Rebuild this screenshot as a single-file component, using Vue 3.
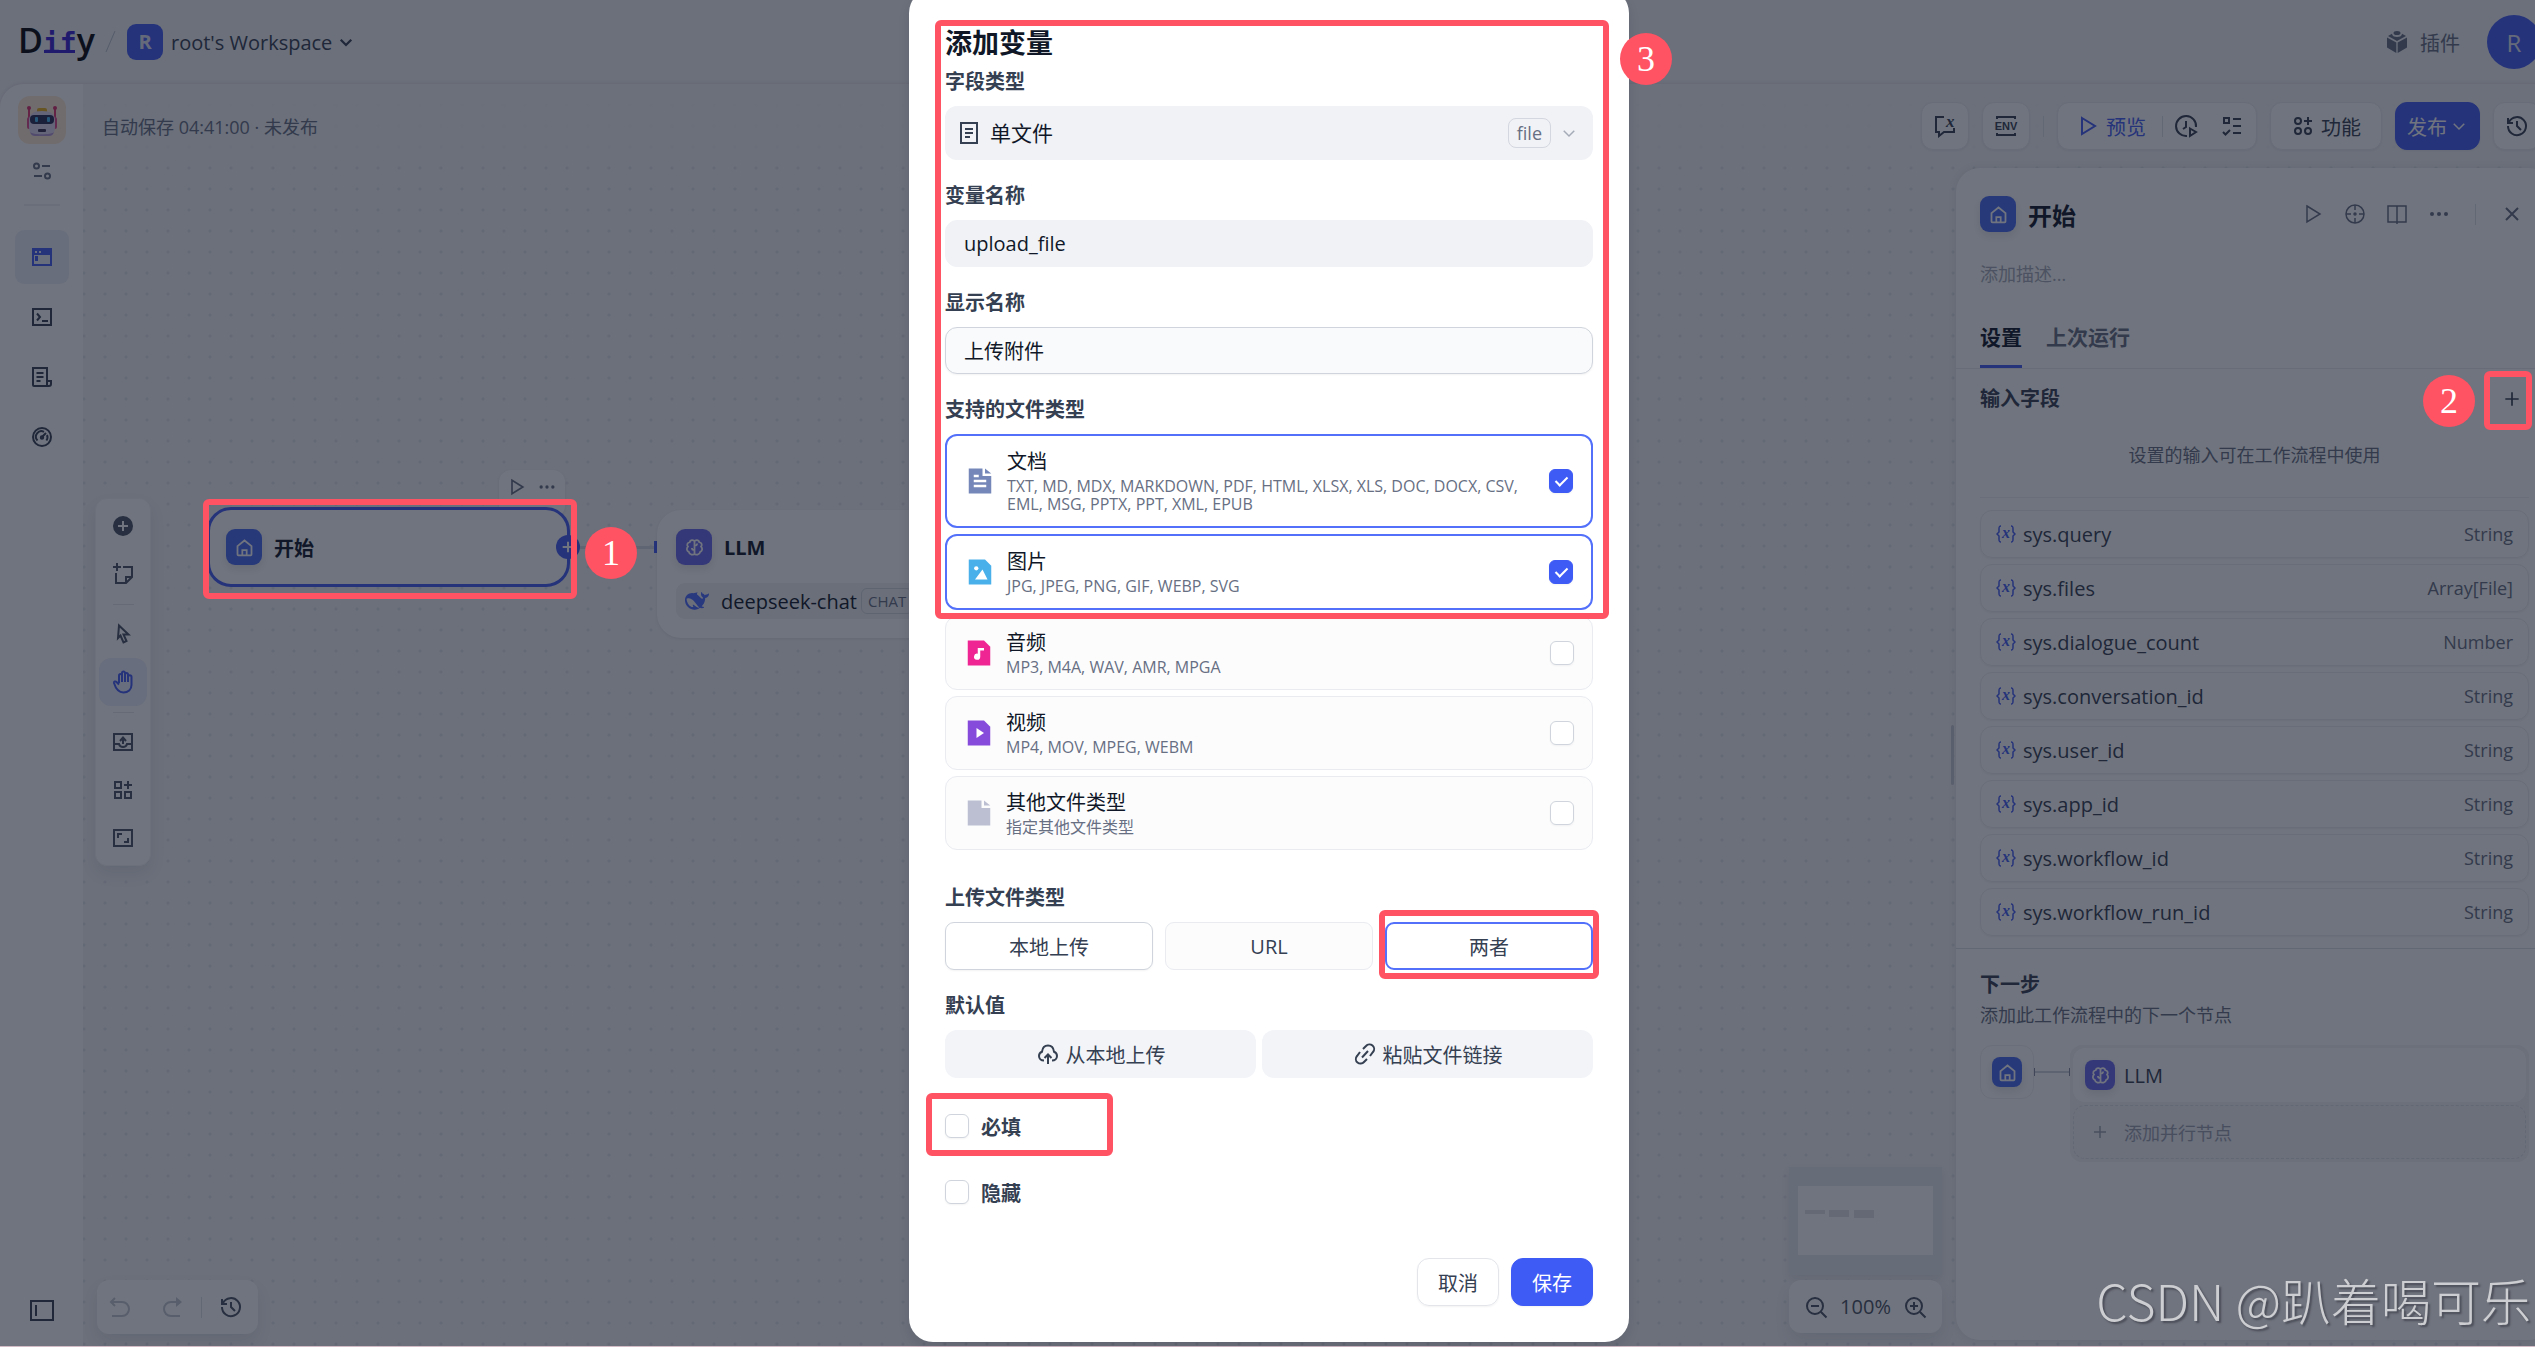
<script setup>
import { ref } from 'vue'

// 图标：24x24，线条型
const icons = {
  down: '<path d="M5 9l7 7 7-7"/>',
  sliders: '<circle cx="6.5" cy="7" r="2.5"/><path d="M12 7h8M4 17h8"/><circle cx="17.5" cy="17" r="2.5"/>',
  window: '<path d="M3 4h18v16H3z"/><path d="M2 3h20v7H2z" fill="currentColor" stroke="none"/><path d="M5 6h2v2H5zM9 6h2v2H9z" fill="#eef1fe" stroke="none"/><path d="M5 11h3v5H5z" fill="currentColor" stroke="none"/>',
  terminal: '<path d="M3 4h18v16H3zM7 8.500l3 3.500-3 3.500M12 16h6"/>',
  logs: '<path d="M17 16V3H3v17c0 .6.4 1 1 1h15c1 0 2-1 2-2v-3h-4v5M6.500 8h7M6.500 12h7M6.500 16h4"/>',
  gauge: '<circle cx="12" cy="12" r="9"/><path d="M7.500 15.500a5.500 5.500 0 0 1 6.500-8.700M17 10a5.500 5.500 0 0 1-.6 5.500M12 12l4-4"/><circle cx="12" cy="12.500" r="1.200"/>',
  sidebar: '<path d="M1 2h22v19H1zM6 6v11"/>',
  addCircle: '<circle cx="12" cy="12" r="10" fill="currentColor" stroke="none"/><path d="M12 7v10M7 12h10" stroke="#fff"/>',
  note: '<path d="M5 11v10h10l6-6V5H12M15 21v-6h6M2 5h8M6 1v8"/>',
  pointer: '<path d="M8 3.500l9.500 9h-5l3 6.500-3 1.500-3-7L7 16z"/>',
  hand: '<path d="M8 13V5.500a1.500 1.500 0 0 1 3 0V12M11 12V3a1.500 1.500 0 0 1 3 0v9M14 12V4.500a1.500 1.500 0 0 1 3 0V12M17 12V7a1.500 1.500 0 0 1 3.500 0v8c0 4.500-3.500 7.500-8 7.500S5 19.500 3 13c-.3-1.500 1.500-2 2.500-1L8 14.500"/>',
  inbox: '<path d="M3 4h18v16H3zM3 14h5c1 4 7 4 8 0h5M12 14V8M9 11l3-3.500 3 3.500"/>',
  appsAdd: '<path d="M4 4h6v6H4zM4 14h6v6H4zM14 14h6v6h-6zM17 3v8M13 7h8"/>',
  fit: '<path d="M3 4h18v16H3zM7 12V8h4M17 12v4h-4"/>',
  undo: '<path d="M7 3L3 7l4 4M3 7h11a6.500 6.500 0 0 1 0 14H4"/>',
  redo: '<path d="M20 7h-9a7 7 0 0 0 0 14h9"/><path d="M16 2l6 5-6 5z" fill="currentColor" stroke="none"/>',
  history: '<path d="M4 8a9 9 0 1 1-1 4M3 4v5h5M12 7v5l4 4"/>',
  play: '<path d="M6 4l13 8-13 8z"/>',
  dots: '<g fill="currentColor" stroke="none"><circle cx="5" cy="12" r="2"/><circle cx="12" cy="12" r="2"/><circle cx="19" cy="12" r="2"/></g>',
  home: '<path d="M4 10.500L12 4l8 6.500V20a1 1 0 0 1-1 1H5a1 1 0 0 1-1-1zM9.500 21v-6h5v6"/>',
  brain: '<path d="M12 4v16M12 5c-1-2-5-2-5.500 1C3.500 6.500 3 9 4.500 11c-2 2-1.500 5 1 6 .5 3.500 5.500 4 6.500 2M12 5c1-2 5-2 5.500 1 3 .5 3.500 3 2 5 2 2 1.500 5-1 6-.5 3.500-5.500 4-6.500 2M12 10c2 0 3-1 3-2.500M12 15c-2 0-3-1-3-2.500"/>',
  whale: '<path fill="currentColor" stroke="none" fill-rule="evenodd" d="M23.748 4.482c-.254-.124-.364.113-.512.234-.051.039-.094.09-.137.136-.372.397-.806.657-1.373.626-.829-.046-1.537.214-2.163.848-.133-.782-.575-1.248-1.247-1.548-.352-.156-.708-.311-.955-.65-.172-.241-.219-.51-.305-.774-.055-.16-.11-.323-.293-.35-.2-.031-.278.136-.356.276-.313.572-.434 1.202-.422 1.84.027 1.436.633 2.58 1.838 3.393.137.093.172.187.129.323-.082.28-.18.552-.266.833-.055.179-.137.217-.329.14a5.526 5.526 0 01-1.736-1.18c-.857-.828-1.631-1.742-2.597-2.458a11.365 11.365 0 00-.689-.471c-.985-.957.13-1.743.388-1.836.27-.098.093-.432-.779-.428-.872.004-1.67.295-2.687.684a3.055 3.055 0 01-.465.137 9.597 9.597 0 00-2.883-.102c-1.885.21-3.39 1.102-4.497 2.623C.082 8.606-.231 10.684.152 12.85c.403 2.284 1.569 4.175 3.36 5.653 1.858 1.533 3.997 2.284 6.438 2.14 1.482-.085 3.133-.284 4.994-1.86.47.234.962.327 1.78.397.63.059 1.236-.03 1.705-.128.735-.156.684-.837.419-.961-2.155-1.004-1.682-.595-2.113-.926 1.096-1.296 2.746-2.642 3.392-7.003.05-.347.007-.565 0-.845-.004-.17.035-.237.23-.256a4.173 4.173 0 001.545-.475c1.396-.763 1.96-2.015 2.093-3.517.02-.23-.004-.467-.247-.588zM11.581 18c-2.089-1.642-3.102-2.183-3.52-2.16-.392.024-.321.471-.235.763.09.288.207.486.371.739.114.167.192.416-.113.603-.673.416-1.842-.14-1.897-.167-1.361-.802-2.5-1.86-3.301-3.307-.774-1.393-1.224-2.887-1.298-4.482-.02-.386.093-.522.477-.592a4.696 4.696 0 011.529-.039c2.132.312 3.946 1.265 5.468 2.774.868.86 1.525 1.887 2.202 2.891.72 1.066 1.494 2.082 2.48 2.914.348.292.625.514.891.677-.802.09-2.14.11-3.054-.614z"/>',
  zoomOut: '<circle cx="11" cy="11" r="8"/><path d="M17 17l5.500 5.500M7 11h8"/>',
  zoomIn: '<circle cx="11" cy="11" r="8"/><path d="M17 17l5.500 5.500M7 11h8M11 7v8"/>',
  cube: '<g fill="currentColor" stroke="none"><path d="M2 7.500l9.300 5v10.500L2 17.500zM22 7.500l-9.300 5v10.500l9.300-5.500zM3 6l4-2.300c0 2 2 3.300 5 3.300s5-1.300 5-3.300L21 6l-9 5z"/><ellipse cx="12" cy="3" rx="3.500" ry="2"/></g>',
  chatVar: '<path d="M11 3H3v15h3v4l5-4h10v-4"/><text x="13" y="13" font-size="17" font-style="italic" font-weight="700" font-family="Liberation Serif, serif" fill="currentColor" stroke="none">x</text>',
  env: '<path d="M3 5V3h18v2M3 19v2h18v-2"/><text x="12" y="16" text-anchor="middle" font-size="11" font-weight="700" font-family="Liberation Sans, sans-serif" fill="currentColor" stroke="none">ENV</text>',
  runHistory: '<path d="M13 22A10 10 0 1 1 22 13M12 7v6l-3 2"/><path d="M16 14.500l6 3.500-6 4z"/>',
  checklist: '<path d="M4 4h5v5H4zM13 5h8M13 12h8M13 19h8M3 18l2.500 2.500L10 16"/>',
  features: '<circle cx="7" cy="7" r="3"/><circle cx="7" cy="17" r="3"/><circle cx="17" cy="17" r="3"/><path d="M17 3v8M13 7h8"/>',
  target: '<circle cx="12" cy="12" r="9"/><path d="M12 3v5M12 16v5M3 12h5M16 12h5"/><circle cx="12" cy="12" r="1"/>',
  book: '<path d="M12 4H3v16h18V4h-9zM12 4v18"/>',
  close: '<path d="M6 6l12 12M18 6L6 18"/>',
  plus: '<path d="M12 4v16M4 12h16"/>',
  doc: '<path d="M4 2h16v20H4zM8 8h8M8 12h8M8 16h5"/>',
  cloud: '<path d="M8 18.500c-3 0-5-2-5-4.500 0-2 1-3.500 3-4.300C6.500 5.500 9 3.500 12 3.500s5.500 2 6 6.200c2 .8 3 2.300 3 4.300 0 2.500-2 4.500-5 4.500M12 22v-9M8.500 16l3.500-3.500 3.500 3.500"/>',
  link: '<path d="M10 7l3-3a4.500 4.500 0 0 1 7 6l-3 4M14 17l-3 3a4.500 4.500 0 0 1-7-6l3-4M15 9l-6 6.500"/>',
}

// 文件类型图标（填充型）
const fileIcons = {
  doc: '<path fill="#7487b8" d="M3 2h11v6h7v14H3zM7 7v2h4V7zM7 11v2h10v-2zM7 15v2h10v-2z" fill-rule="evenodd"/><path fill="#7487b8" d="M16 2l5 4h-5z"/>',
  image: '<path fill="#4ab0ea" d="M3 2h13l5 5v15H3z"/><circle cx="9" cy="9" r="1.700" fill="#fff"/><path fill="#fff" d="M8 18l6-8 4 8z"/>',
  audio: '<path fill="#f02594" d="M3 2h13l5 5v15H3z"/><path fill="#fff" d="M11 8h5v2h-3v5a2.500 2.500 0 1 1-2-2.500z"/>',
  video: '<path fill="#864bdb" d="M3 2h13l5 5v15H3z"/><path fill="#fff" d="M10 8l6 4-6 4z"/>',
  other: '<path fill="#bcbfd2" d="M3 2h11v6h7v14H3z"/><path fill="#bcbfd2" d="M16 2l5 4h-5z"/>',
}

const navItems = ['window', 'terminal', 'logs', 'gauge']

const sysVars = [
  { name: 'sys.query', type: 'String' },
  { name: 'sys.files', type: 'Array[File]' },
  { name: 'sys.dialogue_count', type: 'Number' },
  { name: 'sys.conversation_id', type: 'String' },
  { name: 'sys.user_id', type: 'String' },
  { name: 'sys.app_id', type: 'String' },
  { name: 'sys.workflow_id', type: 'String' },
  { name: 'sys.workflow_run_id', type: 'String' },
]

const fieldType = ref('file')
const varName = ref('upload_file')
const label = ref('上传附件')
const required = ref(false)
const hidden = ref(false)
const method = ref('both')

const fileTypes = ref([
  { id: 'doc', name: '文档', ext: 'TXT, MD, MDX, MARKDOWN, PDF, HTML, XLSX, XLS, DOC, DOCX, CSV, EML, MSG, PPTX, PPT, XML, EPUB', on: true },
  { id: 'image', name: '图片', ext: 'JPG, JPEG, PNG, GIF, WEBP, SVG', on: true },
  { id: 'audio', name: '音频', ext: 'MP3, M4A, WAV, AMR, MPGA', on: false },
  { id: 'video', name: '视频', ext: 'MP4, MOV, MPEG, WEBM', on: false },
  { id: 'other', name: '其他文件类型', ext: '指定其他文件类型', on: false },
])

const methods = [
  { id: 'local', name: '本地上传' },
  { id: 'url', name: 'URL' },
  { id: 'both', name: '两者' },
]
</script>

<template>
  <div class="page">
    <div class="app">
      <header class="top">
        <div class="logo">D<span class="logo-if">if</span>y</div>
        <svg class="slash" viewBox="0 0 12 24"><path d="M11 1L2 22" /></svg>
        <button class="workspace">
          <span class="ws-badge">R</span>
          <span>root's Workspace</span>
          <svg class="ico s18" viewBox="0 0 24 24" v-html="icons.down"></svg>
        </button>
        <a class="plugins" href="#">
          <svg class="ico" viewBox="0 0 24 24" v-html="icons.cube"></svg>
          <span>插件</span>
        </a>
        <button class="avatar">R</button>
      </header>

      <div class="body">
        <nav class="side">
          <div class="robot">
            <svg viewBox="0 0 48 48">
              <path d="M11 13v14M37 13v14" stroke="#e0356f" stroke-width="2" />
              <circle cx="11" cy="12" r="2" fill="#d92d6a" /><circle cx="37" cy="12" r="2" fill="#d92d6a" />
              <rect x="9" y="21" width="4" height="12" rx="2" fill="#e04a90" />
              <rect x="35" y="21" width="4" height="12" rx="2" fill="#e04a90" />
              <rect x="19" y="12" width="10" height="5" rx="2" fill="#e9b21e" />
              <path d="M11 25c0-7 4-10 13-10s13 3 13 10v5c0 6-2 10-6 10H17c-4 0-6-4-6-10z" fill="#e3d9f2" />
              <path d="M12 36c2 3 22 3 24 0-1 3-3 4-5 4H17c-2 0-4-1-5-4z" fill="#b79ad6" />
              <rect x="12" y="19" width="24" height="9" rx="4" fill="#2c2f55" />
              <rect x="17" y="21" width="3" height="5" rx="1" fill="#46b4f0" />
              <rect x="29" y="21" width="3" height="5" rx="1" fill="#46b4f0" />
              <rect x="20" y="33" width="8" height="3" rx="1" fill="#3b3456" />
            </svg>
          </div>
          <button class="side-set"><svg class="ico" viewBox="0 0 24 24" v-html="icons.sliders"></svg></button>
          <hr class="side-line" />
          <button v-for="(n, i) in navItems" :key="n" class="nav" :class="{ active: i === 0 }">
            <svg class="ico" viewBox="0 0 24 24" v-html="icons[n]"></svg>
          </button>
          <button class="side-fold"><svg class="ico" viewBox="0 0 24 24" v-html="icons.sidebar"></svg></button>
        </nav>

        <main class="canvas">
          <div class="toolbar">
            <span class="saved">自动保存 04:41:00 · 未发布</span>
            <button class="tb sq"><svg class="ico" viewBox="0 0 24 24" v-html="icons.chatVar"></svg></button>
            <button class="tb sq"><svg class="ico" viewBox="0 0 24 24" v-html="icons.env"></svg></button>
            <i class="vline"></i>
            <div class="tb group">
              <button class="preview">
                <svg class="ico" viewBox="0 0 24 24" v-html="icons.play"></svg>预览
              </button>
              <i class="vline"></i>
              <button class="mini"><svg class="ico" viewBox="0 0 24 24" v-html="icons.runHistory"></svg></button>
              <button class="mini"><svg class="ico" viewBox="0 0 24 24" v-html="icons.checklist"></svg></button>
            </div>
            <button class="tb feat"><svg class="ico" viewBox="0 0 24 24" v-html="icons.features"></svg>功能</button>
            <button class="tb publish">发布<svg class="ico s18" viewBox="0 0 24 24" v-html="icons.down"></svg></button>
            <button class="tb sq"><svg class="ico" viewBox="0 0 24 24" v-html="icons.history"></svg></button>
          </div>

          <!-- 画布节点 -->
          <div class="node-menu">
            <svg class="ico" viewBox="0 0 24 24" v-html="icons.play"></svg>
            <svg class="ico" viewBox="0 0 24 24" v-html="icons.dots"></svg>
          </div>
          <div class="node start">
            <span class="nicon blue"><svg class="ico" viewBox="0 0 24 24" v-html="icons.home"></svg></span>
            <b>开始</b>
          </div>
          <i class="edge"></i>
          <i class="port"></i>
          <button class="add-port"><svg class="ico" viewBox="0 0 24 24" v-html="icons.plus"></svg></button>
          <div class="node llm">
            <div class="node-head">
              <span class="nicon violet"><svg class="ico" viewBox="0 0 24 24" v-html="icons.brain"></svg></span>
              <b>LLM</b>
            </div>
            <div class="model">
              <svg class="whale" viewBox="0 0 24 24" v-html="icons.whale"></svg>
              <span>deepseek-chat</span>
              <em>CHAT</em>
            </div>
          </div>

          <div class="tools">
            <button><svg class="ico" viewBox="0 0 24 24" v-html="icons.addCircle"></svg></button>
            <button><svg class="ico" viewBox="0 0 24 24" v-html="icons.note"></svg></button>
            <hr />
            <button><svg class="ico" viewBox="0 0 24 24" v-html="icons.pointer"></svg></button>
            <button class="active"><svg class="ico" viewBox="0 0 24 24" v-html="icons.hand"></svg></button>
            <hr />
            <button><svg class="ico" viewBox="0 0 24 24" v-html="icons.inbox"></svg></button>
            <button><svg class="ico" viewBox="0 0 24 24" v-html="icons.appsAdd"></svg></button>
            <button><svg class="ico" viewBox="0 0 24 24" v-html="icons.fit"></svg></button>
          </div>

          <div class="undo-bar">
            <button class="off"><svg class="ico" viewBox="0 0 24 24" v-html="icons.undo"></svg></button>
            <button class="off"><svg class="ico" viewBox="0 0 24 24" v-html="icons.redo"></svg></button>
            <i class="vline"></i>
            <button><svg class="ico" viewBox="0 0 24 24" v-html="icons.history"></svg></button>
          </div>

          <div class="corner">
            <svg class="minimap" viewBox="0 0 153 108">
              <rect width="153" height="108" fill="#e9ecf2" />
              <rect x="9" y="19" width="135" height="69" fill="#fff" />
              <path d="M16 43h20v4H16zM40 43h20v7H40zM65 43h20v8H65z" fill="#e1e3e8" />
            </svg>
            <div class="zoom">
              <button><svg class="ico" viewBox="0 0 24 24" v-html="icons.zoomOut"></svg></button>
              <span>100%</span>
              <button><svg class="ico" viewBox="0 0 24 24" v-html="icons.zoomIn"></svg></button>
            </div>
          </div>

          <!-- 右侧配置面板 -->
          <i class="drag"></i>
          <aside class="panel">
            <div class="p-head">
              <span class="nicon blue"><svg class="ico" viewBox="0 0 24 24" v-html="icons.home"></svg></span>
              <h3>开始</h3>
              <button><svg class="ico thin" viewBox="0 0 24 24" v-html="icons.play"></svg></button>
              <button><svg class="ico thin" viewBox="0 0 24 24" v-html="icons.target"></svg></button>
              <button><svg class="ico thin" viewBox="0 0 24 24" v-html="icons.book"></svg></button>
              <button><svg class="ico" viewBox="0 0 24 24" v-html="icons.dots"></svg></button>
              <i class="vline"></i>
              <button><svg class="ico" viewBox="0 0 24 24" v-html="icons.close"></svg></button>
            </div>
            <p class="p-desc">添加描述...</p>
            <div class="tabs">
              <button class="on">设置</button>
              <button>上次运行</button>
            </div>
            <section class="inputs">
              <div class="in-head">
                <h4>输入字段</h4>
                <button><svg class="ico" viewBox="0 0 24 24" v-html="icons.plus"></svg></button>
              </div>
              <p class="in-tip">设置的输入可在工作流程中使用</p>
              <ul>
                <li v-for="v in sysVars" :key="v.name">
                  <svg class="var" viewBox="0 0 20 20">
                    <path d="M5 2C3 2 3 3 3 5v3L1 10l2 2v3c0 2 0 3 2 3M15 2c2 0 2 1 2 3v3l2 2-2 2v3c0 2 0 3-2 3" />
                    <text x="10" y="14" text-anchor="middle">x</text>
                  </svg>
                  <span>{{ v.name }}</span>
                  <small>{{ v.type }}</small>
                </li>
              </ul>
            </section>
            <section class="next">
              <h4>下一步</h4>
              <p>添加此工作流程中的下一个节点</p>
              <div class="flow">
                <div class="flow-from"><span class="nicon sm blue"><svg class="ico" viewBox="0 0 24 24" v-html="icons.home"></svg></span></div>
                <i class="flow-line"></i>
                <div class="flow-to">
                  <div class="flow-card"><span class="nicon sm violet"><svg class="ico" viewBox="0 0 24 24" v-html="icons.brain"></svg></span>LLM</div>
                  <button class="flow-add"><svg class="ico s18" viewBox="0 0 24 24" v-html="icons.plus"></svg>添加并行节点</button>
                </div>
              </div>
            </section>
          </aside>
        </main>
      </div>
    </div>

    <div class="overlay">
      <form class="modal" @submit.prevent>
        <h2>添加变量</h2>
        <div class="fields">
          <div class="field">
            <label for="ftype">字段类型</label>
            <div class="select">
              <svg class="ico" viewBox="0 0 24 24" v-html="icons.doc"></svg>
              <select id="ftype" v-model="fieldType">
                <option value="file">单文件</option>
              </select>
              <span class="tag">file</span>
              <svg class="ico s18 arrow" viewBox="0 0 24 24" v-html="icons.down"></svg>
            </div>
          </div>
          <div class="field">
            <label for="vname">变量名称</label>
            <input id="vname" v-model="varName" class="text" type="text" />
          </div>
          <div class="field">
            <label for="vlabel">显示名称</label>
            <input id="vlabel" v-model="label" class="text focus" type="text" />
          </div>
          <div class="field types">
            <span class="flabel">支持的文件类型</span>
            <div class="type-list">
              <label v-for="t in fileTypes" :key="t.id" class="type" :class="{ on: t.on }">
                <svg class="ficon" viewBox="0 0 24 24" v-html="fileIcons[t.id]"></svg>
                <span class="type-text">
                  <span class="type-name">{{ t.name }}</span>
                  <span class="type-ext">{{ t.ext }}</span>
                </span>
                <input v-model="t.on" type="checkbox" />
              </label>
            </div>
          </div>
          <div class="field">
            <span class="flabel">上传文件类型</span>
            <div class="methods">
              <button v-for="m in methods" :key="m.id" type="button" :class="[m.id, { on: method === m.id }]" @click="method = m.id">{{ m.name }}</button>
            </div>
          </div>
          <div class="field">
            <span class="flabel">默认值</span>
            <div class="defaults">
              <button type="button"><svg class="ico" viewBox="0 0 24 24" v-html="icons.cloud"></svg>从本地上传</button>
              <button type="button"><svg class="ico" viewBox="0 0 24 24" v-html="icons.link"></svg>粘贴文件链接</button>
            </div>
          </div>
          <div class="checks">
            <label><input v-model="required" type="checkbox" />必填</label>
            <label><input v-model="hidden" type="checkbox" />隐藏</label>
          </div>
        </div>
        <footer>
          <button type="button" class="cancel">取消</button>
          <button type="submit" class="save">保存</button>
        </footer>
        <i class="mark m-form"></i>
        <i class="mark m-both"></i>
        <i class="mark m-req"></i>
        <span class="num n3">3</span>
      </form>
    </div>

    <!-- 步骤标注 -->
    <i class="mark m-start"></i>
    <span class="num n1">1</span>
    <i class="mark m-add"></i>
    <span class="num n2">2</span>
    <div class="watermark">CSDN @趴着喝可乐</div>
  </div>
</template>

<style>
body {
  margin: 0;
}
</style>

<style scoped>
.page {
  position: relative;
  height: 100vh;
  min-height: 1200px;
  overflow: hidden;
  font-family: "Open Sans", "Noto Sans CJK SC", sans-serif;
  font-size: 20px;
  color: #354052;
  background: #f2f4f7;
}
* {
  box-sizing: border-box;
}
button,
input,
select {
  font: inherit;
  color: inherit;
  background: none;
  border: 0;
  padding: 0;
  margin: 0;
}
button {
  display: flex;
  align-items: center;
  justify-content: center;
  cursor: pointer;
}
h2, h3, h4, p, ul, hr {
  margin: 0;
  padding: 0;
  border: 0;
}
.ico {
  width: 24px;
  height: 24px;
  flex: none;
  fill: none;
  stroke: currentColor;
  stroke-width: 2;
}
.ico.s18 {
  width: 18px;
  height: 18px;
}
.ico.thin {
  stroke-width: 1.5;
}
.vline {
  width: 1px;
  height: 21px;
  background: #dfe2e8;
}

/* 页面整体比窗口略宽，右侧溢出部分隐藏 */
.app {
  display: flex;
  flex-direction: column;
  width: calc(100% + 24px);
  height: 100%;
}
.top {
  flex: none;
  display: flex;
  align-items: center;
  height: 84px;
  padding: 0 18px;
}
.logo {
  width: 86px;
  font-size: 34px;
  font-weight: 600;
  line-height: 48px;
  color: #05060c;
}
.logo-if {
  position: relative;
  font-family: "DejaVu Sans Mono", monospace;
  font-size: 28px;
  font-weight: 700;
  color: #3a22d8;
}
/* if 两个字母底部相连 */
.logo-if::after {
  content: "";
  position: absolute;
  left: 1px;
  right: 2px;
  bottom: 7px;
  height: 3px;
  background: #3a22d8;
}
.slash {
  width: 12px;
  height: 24px;
  margin-right: 11px;
  fill: none;
  stroke: #bcc2cd;
}
.workspace {
  gap: 5px;
  color: #354052;
}
.workspace .ico {
  stroke-width: 3;
}
.ws-badge {
  width: 36px;
  height: 36px;
  margin-right: 3px;
  border-radius: 9px;
  background: #445cf5;
  color: #e4e7f5;
  font-weight: 700;
  line-height: 36px;
}
.plugins {
  display: flex;
  align-items: center;
  gap: 11px;
  margin-left: auto;
  margin-right: 27px;
  color: #676f83;
  text-decoration: none;
}
.avatar {
  width: 54px;
  height: 54px;
  border-radius: 50%;
  background: #445cf5;
  color: #e4e7f5;
  font-size: 24px;
}

.body {
  flex: 1;
  display: flex;
  min-height: 0;
  border-radius: 24px 0 0 0;
  overflow: hidden;
  box-shadow: 0 -1px 3px #e6dfe6;
}
.side {
  flex: 0 0 83px;
  display: flex;
  flex-direction: column;
  align-items: center;
  padding: 12px 0 24px;
  background: #fff;
}
.robot {
  width: 48px;
  height: 48px;
  border-radius: 12px;
  background: #ffead5;
}
.side-set {
  width: 48px;
  height: 54px;
  color: #676f83;
}
.side-line {
  width: 36px;
  height: 2px;
  margin: 6px 0 24px;
  background: #f0f1f4;
}
.nav {
  width: 54px;
  height: 54px;
  margin-bottom: 6px;
  border-radius: 9px;
}
.nav.active {
  background: #eef0fc;
  color: #445cf5;
}
.side-fold {
  margin-top: auto;
}

.canvas {
  position: relative;
  flex: 1;
  display: flex;
  flex-direction: column;
  min-width: 0;
  background-color: #f2f4f7;
  background-image: radial-gradient(circle at 2px 2px, #e2e4ec 1px, transparent 2px);
  background-size: 21px 21px;
  background-position: -1px -2px;
}
.toolbar {
  flex: none;
  display: flex;
  align-items: center;
  gap: 13px;
  height: 84px;
  padding: 0 18px 0 19px;
  background: linear-gradient(#f2f4f7, #f2f4f7cc 80%, transparent);
}
.saved {
  margin-right: auto;
  font-size: 18px;
  color: #676f83;
}
.tb {
  display: flex;
  align-items: center;
  height: 48px;
  border: 1px solid #e9ebf0;
  border-radius: 12px;
  background: #fff;
  box-shadow: 0 1px 2px #1018280d;
}
.tb.sq {
  width: 48px;
}
.group {
  padding: 0 1px 0 9px;
}
.preview {
  gap: 6px;
  padding: 0 16px 0 9px;
  color: #445cf5;
}
.mini {
  width: 46px;
}
.feat {
  gap: 6px;
  padding: 0 20px;
}
.publish {
  padding: 0 11px;
  gap: 3px;
  background: #445cf5;
  border-color: #445cf5;
  color: #fff;
}

.node {
  position: absolute;
  border-radius: 24px;
  background: #fff;
}
.node b {
  color: #101828;
}
.nicon {
  display: flex;
  align-items: center;
  justify-content: center;
  width: 36px;
  height: 36px;
  border-radius: 9px;
  color: #fff;
  box-shadow: 0 4px 8px #1018281a;
}
.nicon .ico {
  width: 21px;
  height: 21px;
}
.nicon.sm {
  width: 30px;
  height: 30px;
  border-radius: 8px;
}
.blue {
  background: #4d6df5;
}
.violet {
  background: #6c6af0;
}
.start {
  left: 124px;
  top: 423px;
  display: flex;
  align-items: center;
  gap: 12px;
  width: 363px;
  height: 80px;
  padding: 0 16px;
  border: 3px solid #445cf5;
}
.node-menu {
  position: absolute;
  left: 416px;
  top: 386px;
  display: flex;
  justify-content: space-around;
  width: 66px;
  height: 48px;
  padding: 7px 3px;
  border-radius: 12px;
  background: #fff;
  box-shadow: 0 1px 3px #10182814;
  color: #676f83;
}
.node-menu .ico {
  width: 20px;
  height: 20px;
}
.edge {
  position: absolute;
  left: 487px;
  top: 462px;
  width: 86px;
  height: 3px;
  background: #d8dae3;
}
.port {
  position: absolute;
  left: 571px;
  top: 457px;
  width: 3px;
  height: 12px;
  background: #445cf5;
}
.add-port {
  position: absolute;
  left: 473px;
  top: 451px;
  width: 24px;
  height: 24px;
  border-radius: 50%;
  background: #445cf5;
  color: #fff;
}
.add-port .ico {
  width: 16px;
  height: 16px;
  stroke-width: 3;
}
.llm {
  left: 574px;
  top: 426px;
  width: 360px;
  height: 128px;
  padding: 19px;
  box-shadow: 0 1px 3px #10182814;
}
.node-head {
  display: flex;
  align-items: center;
  gap: 12px;
}
.model {
  display: flex;
  align-items: center;
  height: 36px;
  margin-top: 18px;
  padding: 0 9px;
  border-radius: 9px;
  background: #f1f2f6;
  color: #101828;
}
.whale {
  width: 24px;
  height: 24px;
  margin-right: 12px;
  color: #4d6bfe;
}
.model em {
  margin-left: 4px;
  padding: 0 6px;
  border: 1px solid #d4d7df;
  border-radius: 6px;
  font-size: 15px;
  font-style: normal;
  line-height: 24px;
  color: #676f83;
}

.tools {
  position: absolute;
  left: 12px;
  top: 414px;
  padding: 3px;
  border: 1px solid #f5f6f8;
  border-radius: 12px;
  background: #fff;
  box-shadow: 0 8px 16px #10182814;
}
.tools button {
  width: 48px;
  height: 48px;
  border-radius: 12px;
  color: #495464;
}
.tools button.active {
  background: #eceffd;
  color: #445cf5;
}
.tools hr {
  width: 21px;
  height: 1px;
  margin: 6px auto 5px;
  background: #e3e5ea;
}
.undo-bar {
  position: absolute;
  left: 14px;
  bottom: 13px;
  display: flex;
  align-items: center;
  gap: 6px;
  height: 54px;
  padding: 0 4px 0 0;
  border-radius: 12px;
  background: #fff;
  box-shadow: 0 8px 16px #10182814;
}
.undo-bar button {
  width: 46px;
  color: #495464;
}
.undo-bar .off {
  color: #c4c8d2;
}
.corner {
  position: absolute;
  right: 617px;
  bottom: 14px;
  width: 153px;
}
.minimap {
  display: block;
  width: 153px;
  height: 108px;
  box-shadow: 0 4px 8px #10182814;
}
.zoom {
  display: flex;
  align-items: center;
  justify-content: space-between;
  height: 53px;
  margin-top: 5px;
  padding: 0 15px;
  border-radius: 12px;
  background: #fff;
  box-shadow: 0 8px 16px #10182814;
  color: #495464;
}

.drag {
  position: absolute;
  right: 605px;
  top: 641px;
  width: 3px;
  height: 60px;
  border-radius: 2px;
  background: #c6cad3;
}
.panel {
  flex: 1;
  align-self: flex-end;
  display: flex;
  flex-direction: column;
  width: 597px;
  margin: 0 6px 7px 0;
  border-radius: 24px;
  background: #fff;
  box-shadow: 0 0 8px #10182814;
}
.p-head {
  display: flex;
  align-items: center;
  height: 48px;
  margin-top: 22px;
  padding: 0 20px 0 24px;
  color: #676f83;
}
.p-head h3 {
  flex: 1;
  margin-left: 12px;
  font-size: 24px;
  color: #101828;
}
.p-head button {
  width: 42px;
  height: 36px;
}
.p-head .vline {
  margin: 0 15px;
}
.p-desc {
  margin-top: 18px;
  padding: 0 24px;
  font-size: 18px;
  line-height: 36px;
  color: #a6abb8;
}
.tabs {
  display: flex;
  gap: 24px;
  height: 77px;
  padding: 0 24px;
  border-bottom: 1px solid #e9ebf0;
}
.tabs button {
  padding-top: 14px;
  border-bottom: 3px solid transparent;
  font-size: 21px;
  font-weight: 700;
  color: #676f83;
}
.tabs .on {
  color: #101828;
  border-color: #445cf5;
}
.inputs {
  padding: 12px 24px;
  border-bottom: 1px solid #dfe2e8;
}
h4 {
  font-size: 20px;
  line-height: 36px;
}
.in-head {
  display: flex;
  justify-content: space-between;
  color: #354052;
}
.in-head button {
  width: 34px;
}
.in-head .ico,
.flow-add .ico {
  stroke-width: 2;
  width: 20px;
}
.in-tip {
  padding: 20px 0 24px;
  border-bottom: 1px solid #f0f1f4;
  font-size: 18px;
  line-height: 36px;
  text-align: center;
  color: #676f83;
}
.inputs ul {
  display: flex;
  flex-direction: column;
  gap: 6px;
  margin-top: 12px;
  list-style: none;
}
.inputs li {
  display: flex;
  align-items: center;
  gap: 7px;
  height: 48px;
  padding: 0 15px;
  border: 1px solid #edeef2;
  border-radius: 12px;
  box-shadow: 0 1px 2px #1018280d;
}
.inputs small {
  margin-left: auto;
  font-size: 18px;
  color: #676f83;
}
.var {
  width: 20px;
  height: 20px;
  fill: none;
  stroke: #445cf5;
  stroke-width: 1.5;
}
.var text {
  font: italic 700 16px "Liberation Serif", serif;
  fill: #445cf5;
  stroke: none;
}
.next {
  padding: 18px 24px;
}
.next p {
  font-size: 18px;
  line-height: 24px;
  color: #676f83;
}
.flow {
  display: flex;
  align-items: flex-start;
  margin-top: 18px;
}
.flow-from {
  display: flex;
  align-items: center;
  justify-content: center;
  width: 54px;
  height: 54px;
  border: 1px solid #f0f1f4;
  border-radius: 12px;
}
.flow-line {
  width: 36px;
  height: 8px;
  margin-top: 23px;
  border: 1px solid #8a90a0;
  border-width: 0 1px;
  background: linear-gradient(#d0d4dd, #d0d4dd) center / 100% 2px no-repeat;
}
.flow-to {
  flex: 1;
  padding: 3px;
  border-radius: 12px;
  background: #f2f4f7;
}
.flow-card,
.flow-add {
  display: flex;
  align-items: center;
  justify-content: flex-start;
  gap: 9px;
  width: 100%;
  height: 54px;
  padding: 0 12px;
  border-radius: 12px;
  background: #fff;
  font-size: 20px;
}
.flow-add {
  gap: 14px;
  margin-top: 3px;
  padding: 0 16px;
  border: 1px dashed #dfe2e8;
  background: none;
  font-size: 18px;
  color: #9ca1b0;
}

/* 弹窗 */
.overlay {
  position: absolute;
  inset: 0;
  display: flex;
  align-items: flex-end;
  justify-content: center;
  padding-bottom: 4px;
  padding-left: 3px;
  border-bottom: 1px solid #d3bcc6;
  background: rgba(16, 24, 40, 0.6);
}
.modal {
  position: relative;
  flex: none;
  width: 720px;
  padding: 36px;
  border-radius: 24px;
  background: #fff;
  box-shadow: 0 6px 12px #1018281a;
}
.modal h2 {
  margin-bottom: 3px;
  font-size: 27px;
  line-height: 36px;
  color: #101828;
}
.fields {
  display: flex;
  flex-direction: column;
  gap: 18px;
}
.field > label,
.flabel {
  display: block;
  margin-bottom: 6px;
  font-weight: 700;
  line-height: 36px;
}
.select {
  display: flex;
  align-items: center;
  height: 54px;
  padding: 0 15px 0 12px;
  border-radius: 12px;
  background: #f1f2f6;
}
.select select {
  flex: 1;
  margin-left: 9px;
  appearance: none;
  font-size: 21px;
  color: #101828;
}
.tag {
  padding: 0 8px;
  border: 1px solid #d4d7df;
  border-radius: 8px;
  font-size: 18px;
  line-height: 28px;
  color: #676f83;
}
.arrow {
  margin-left: 9px;
  color: #a6abb8;
}
.text {
  display: block;
  width: 100%;
  height: 47px;
  padding: 0 18px;
  border: 1px solid #f1f2f6;
  border-radius: 12px;
  background: #f1f2f6;
  color: #101828;
}
.text.focus {
  border-color: #d0d5dd;
  background: #f9fafb;
  box-shadow: 0 1px 2px #1018280d;
}
.types {
  padding-bottom: 12px;
}
.type-list {
  display: flex;
  flex-direction: column;
  gap: 6px;
}
.type {
  display: flex;
  align-items: center;
  gap: 12px;
  padding: 11px 18px;
  border: 1px solid #e9ebf0;
  border-radius: 12px;
  background: #fcfcfd;
}
.type.on {
  padding: 11px 18px;
  border: 2px solid #5270fa;
  background: #fff;
}
.ficon {
  flex: none;
  width: 30px;
  height: 30px;
}
.type-text {
  flex: 1;
  display: flex;
  flex-direction: column;
}
.type-name {
  line-height: 30px;
  color: #101828;
}
.type-ext {
  padding-bottom: 2px;
  font-size: 16px;
  line-height: 18px;
  color: #676f83;
}
input[type="checkbox"] {
  appearance: none;
  flex: none;
  display: flex;
  justify-content: center;
  width: 24px;
  height: 24px;
  border: 1px solid #d0d5dd;
  border-radius: 6px;
  background: #fff;
  box-shadow: 0 1px 2px #1018280d;
}
input[type="checkbox"]:checked {
  border-color: #3f5bf6;
  background: #3f5bf6;
}
input[type="checkbox"]:checked::after {
  content: "";
  width: 5px;
  height: 10px;
  margin-top: 4px;
  border: solid #fff;
  border-width: 0 2px 2px 0;
  transform: rotate(45deg);
}
.methods {
  display: grid;
  grid-template-columns: repeat(3, 1fr);
  gap: 12px;
}
.methods button {
  height: 48px;
  border: 1px solid #e9ebf0;
  border-radius: 9px;
  background: #fcfcfd;
}
.methods .local {
  border-color: #d0d5dd;
  background: #fff;
  box-shadow: 0 1px 2px #1018280d;
}
.methods .on {
  border: 2px solid #5270fa;
  background: #fff;
}
.defaults {
  display: flex;
  gap: 6px;
}
.defaults button {
  flex: 1 1 auto;
  gap: 6px;
  height: 48px;
  border-radius: 12px;
  background: #f2f4f8;
}
.checks {
  display: flex;
  flex-direction: column;
  gap: 18px;
  padding-top: 6px;
}
.checks label {
  display: flex;
  align-items: center;
  gap: 12px;
  height: 48px;
  font-weight: 700;
}
.modal footer {
  display: flex;
  justify-content: flex-end;
  gap: 12px;
  margin-top: 42px;
}
.modal footer button {
  height: 48px;
  padding: 0 20px;
  border: 1px solid #e3e5ea;
  border-radius: 12px;
  box-shadow: 0 1px 2px #1018280d;
}
.modal footer .save {
  border-color: #3f5bf6;
  background: #3f5bf6;
  color: #fff;
}

/* 红色标注框与序号 */
.mark {
  position: absolute;
  border: 6px solid #ff5263;
  border-radius: 6px;
}
.num {
  position: absolute;
  width: 52px;
  height: 52px;
  border-radius: 50%;
  background: #ff5263;
  color: #fff;
  font: 36px/52px "Liberation Serif", serif;
  text-align: center;
}
.m-form {
  left: 26px;
  right: 20px;
  bottom: 723px;
  height: 599px;
}
.m-both {
  right: 30px;
  bottom: 363px;
  width: 220px;
  height: 69px;
}
.m-req {
  left: 17px;
  bottom: 186px;
  width: 187px;
  height: 63px;
}
.n3 {
  right: -43px;
  bottom: 1257px;
}
.m-start {
  left: 203px;
  top: 499px;
  width: 374px;
  height: 100px;
}
.n1 {
  left: 585px;
  top: 527px;
}
.m-add {
  right: 3px;
  top: 371px;
  width: 48px;
  height: 59px;
}
.n2 {
  right: 60px;
  top: 375px;
}
.watermark {
  position: absolute;
  right: 4px;
  bottom: 12px;
  font: 300 50px/72px "Noto Sans CJK SC", sans-serif;
  color: #cdced1;
  text-shadow: 2px 2px 2px #4a4d57;
}
</style>
